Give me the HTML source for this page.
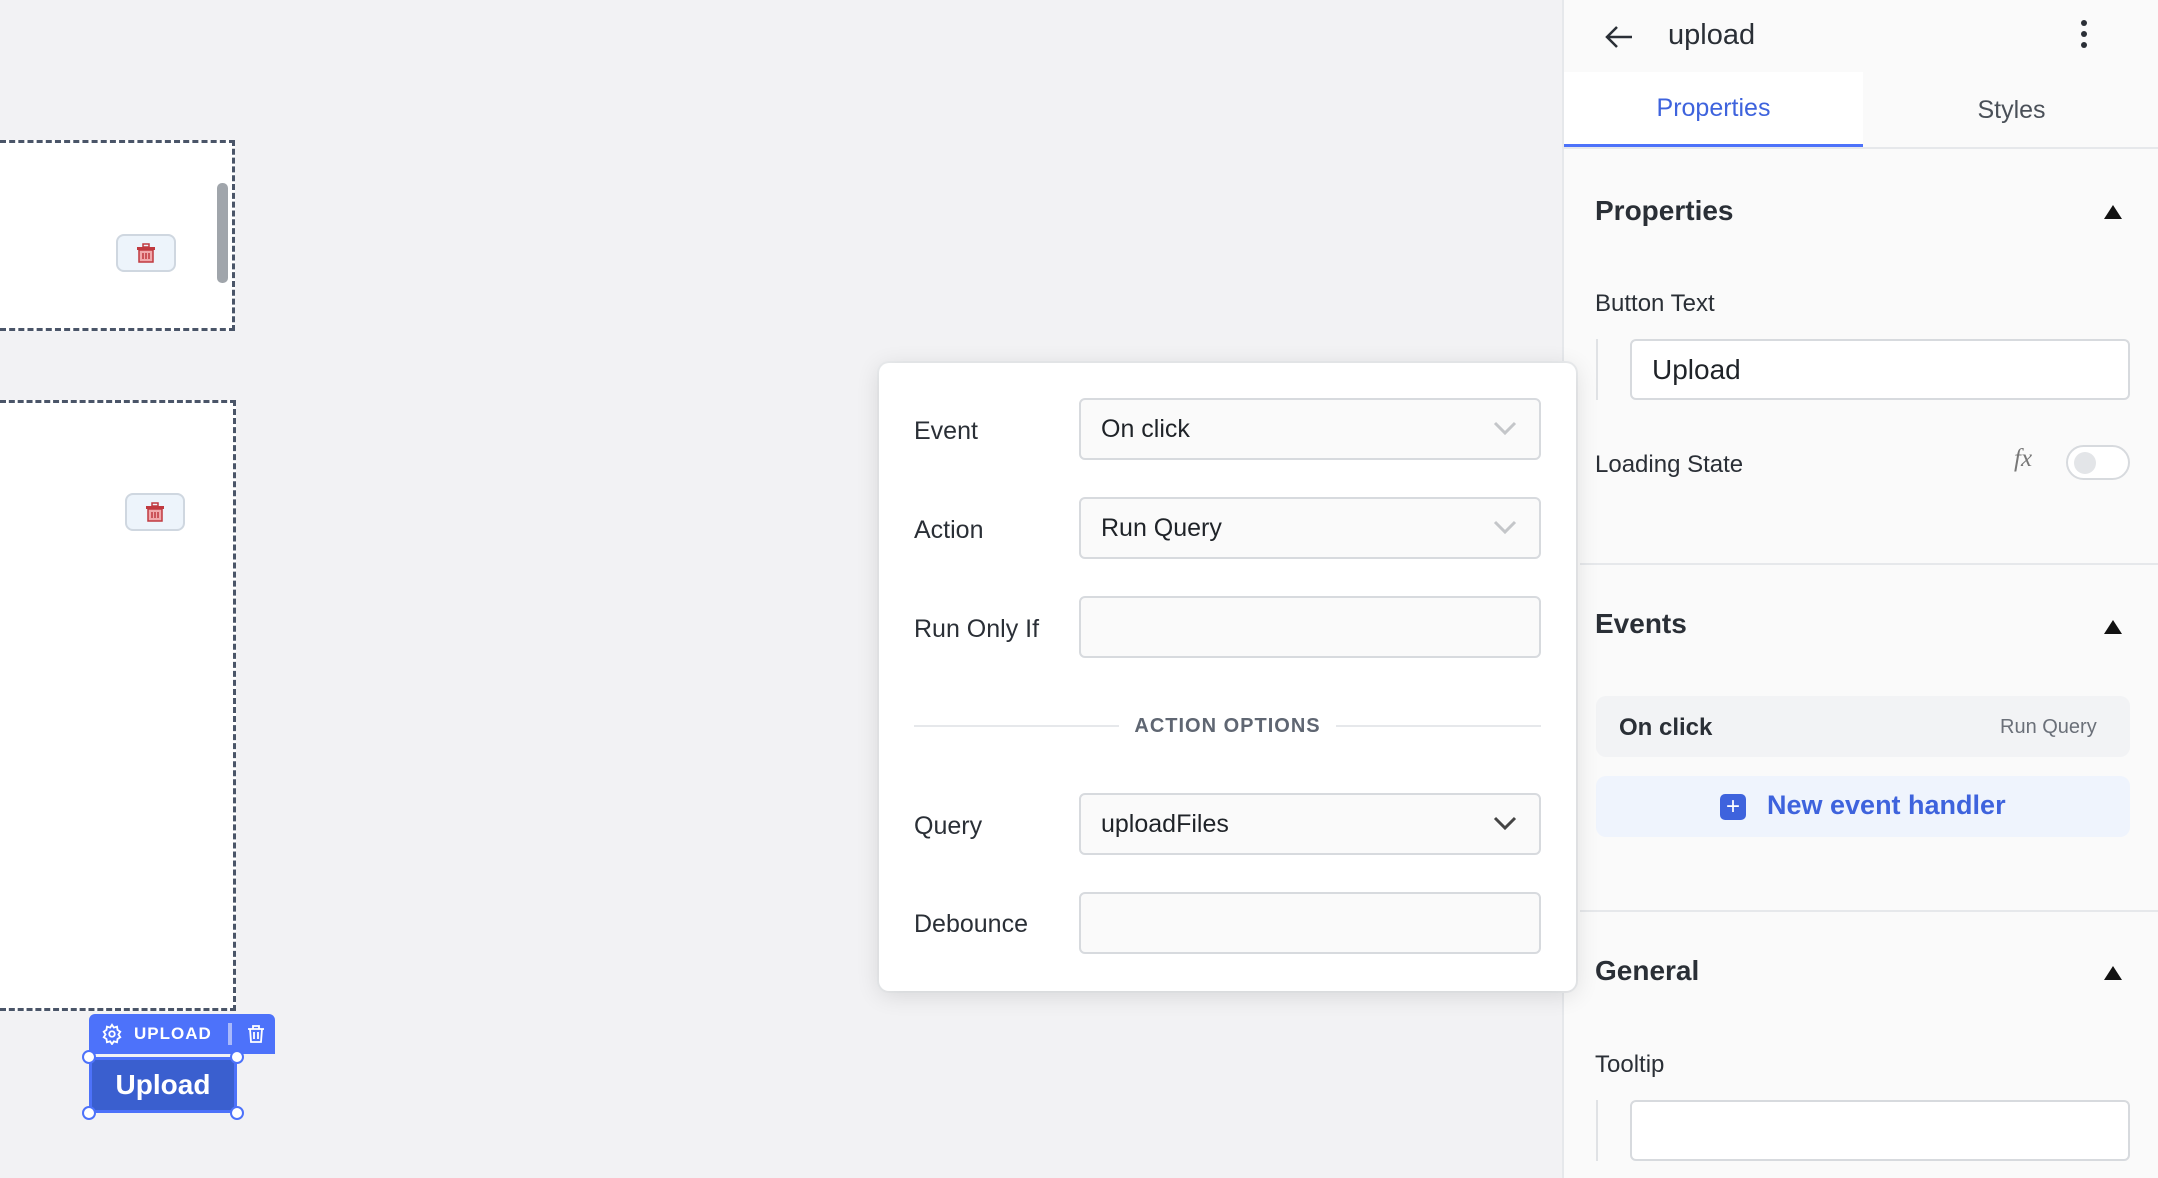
<!DOCTYPE html>
<html><head><meta charset="utf-8"><style>
*{box-sizing:border-box;margin:0;padding:0}
body{width:2158px;height:1178px;overflow:hidden;background:#f2f2f4;font-family:"Liberation Sans",sans-serif;color:#1f2328;position:relative}
.a{position:absolute}
.box{background:#fff;border:3px dashed #4a5568;border-left:none}
.trash{background:#edf4fb;border:2px solid #cfd7e0;border-radius:8px;display:flex;align-items:center;justify-content:center}
.panel{left:1562px;top:0;width:596px;height:1178px;background:#fafafa;border-left:2px solid #e6e8eb}
.lbl{font-size:25px;color:#2a2f36}
.inp{background:#fafafa;border:2px solid #d7dade;border-radius:6px;font-size:25px;color:#1f2328;display:flex;align-items:center;padding-left:20px}
.chev{position:absolute;right:22px;top:50%;margin-top:-8px}
.h{font-size:28px;font-weight:bold;color:#2a2f36}
.tri{width:0;height:0;border-left:9px solid transparent;border-right:9px solid transparent;border-bottom:14px solid #111}
</style></head><body>

<div class="a box" style="left:0;top:140px;width:235px;height:191px"></div>
<div class="a" style="left:217px;top:183px;width:11px;height:100px;background:#a0a5ab;border-radius:5px"></div>
<div class="a trash" style="left:116px;top:234px;width:60px;height:38px">
<svg width="22" height="22" viewBox="0 0 22 22"><rect x="8" y="2" width="6" height="3" fill="none" stroke="#c0393f" stroke-width="1.5"/><rect x="2" y="5" width="18" height="3" fill="#c0393f"/><rect x="4" y="8" width="14" height="12" fill="#f1a8ab" stroke="#c0393f" stroke-width="1.5"/><path d="M8 11v6M11 11v6M14 11v6" stroke="#c0393f" stroke-width="1.5"/></svg></div>
<div class="a box" style="left:0;top:400px;width:236px;height:611px"></div>
<div class="a trash" style="left:125px;top:493px;width:60px;height:38px">
<svg width="22" height="22" viewBox="0 0 22 22"><rect x="8" y="2" width="6" height="3" fill="none" stroke="#c0393f" stroke-width="1.5"/><rect x="2" y="5" width="18" height="3" fill="#c0393f"/><rect x="4" y="8" width="14" height="12" fill="#f1a8ab" stroke="#c0393f" stroke-width="1.5"/><path d="M8 11v6M11 11v6M14 11v6" stroke="#c0393f" stroke-width="1.5"/></svg></div>

<div class="a" style="left:89px;top:1014px;width:186px;height:40px;background:#4d72fa;border-radius:6px 6px 0 0;color:#fff;font-weight:bold;font-size:17px;letter-spacing:1px;display:flex;align-items:center">
<svg style="margin-left:12px" width="22" height="22" viewBox="0 0 24 24" fill="none" stroke="#fff" stroke-width="2"><circle cx="12" cy="12" r="3"/><path d="M12 2l2 3 3.5-1 .5 3.5 3 2-2 3 2 3-3 2-.5 3.5-3.5-1-2 3-2-3-3.5 1-.5-3.5-3-2 2-3-2-3 3-2 .5-3.5 3.5 1z"/></svg>
<span style="margin-left:11px">UPLOAD</span>
<span style="margin-left:16px;width:4px;height:22px;background:#a9b9fb"></span>
<svg style="margin-left:14px" width="20" height="20" viewBox="0 0 20 20" fill="none" stroke="#fff" stroke-width="1.8"><path d="M2 5h16M7 5V2h6v3M4 5l1 13h10l1-13M8 8v7M12 8v7"/></svg></div>
<div class="a" style="left:89px;top:1057px;width:148px;height:56px;background:#3a5fcf;border:3px solid #4d72fa;color:#fff;font-weight:bold;font-size:28px;display:flex;align-items:center;justify-content:center">Upload</div>
<div class="a" style="left:82px;top:1050px;width:14px;height:14px;border:2px solid #4d72fa;border-radius:50%;background:#fff"></div>
<div class="a" style="left:230px;top:1050px;width:14px;height:14px;border:2px solid #4d72fa;border-radius:50%;background:#fff"></div>
<div class="a" style="left:82px;top:1106px;width:14px;height:14px;border:2px solid #4d72fa;border-radius:50%;background:#fff"></div>
<div class="a" style="left:230px;top:1106px;width:14px;height:14px;border:2px solid #4d72fa;border-radius:50%;background:#fff"></div>

<div class="a panel">
<svg class="a" style="left:40px;top:24px" width="30" height="26" viewBox="0 0 30 26" fill="none" stroke="#2a2f36" stroke-width="2.5"><path d="M28 13H3M13 3L3 13l10 10"/></svg>
<div class="a" style="left:104px;top:19px;font-size:29px;color:#2a2f36">upload</div>
<div class="a" style="left:517px;top:20px;width:6px;height:6px;border-radius:50%;background:#2a2f36;box-shadow:0 11px 0 #2a2f36,0 22px 0 #2a2f36"></div>
<div class="a" style="left:0;top:72px;width:299px;height:76px;background:#fff;border-bottom:4px solid #4d72fa"></div>
<div class="a" style="left:0;top:147px;width:596px;height:2px;background:#e6e8eb"></div>
<div class="a" style="left:0;top:94px;width:299px;text-align:center;font-size:25px;color:#3e63dd">Properties</div>
<div class="a" style="left:299px;top:96px;width:297px;text-align:center;font-size:25px;color:#4a5058">Styles</div>
<div class="a h" style="left:31px;top:195px">Properties</div>
<div class="a tri" style="left:540px;top:205px"></div>
<div class="a lbl" style="left:31px;top:290px;font-size:24px">Button Text</div>
<div class="a" style="left:32px;top:339px;width:2px;height:61px;background:#e0e2e5"></div>
<div class="a inp" style="left:66px;top:339px;width:500px;height:61px;background:#fff;font-size:28px">Upload</div>
<div class="a lbl" style="left:31px;top:451px;font-size:24px">Loading State</div>
<div class="a" style="left:450px;top:445px;font-family:'Liberation Serif',serif;font-style:italic;font-size:25px;color:#777">fx</div>
<div class="a" style="left:502px;top:445px;width:64px;height:35px;border:2px solid #d7dade;border-radius:18px;background:#fff"><div style="position:absolute;left:6px;top:5px;width:22px;height:22px;border-radius:50%;background:#e3e5e8"></div></div>
<div class="a" style="left:16px;top:563px;width:580px;height:2px;background:#e6e8eb"></div>
<div class="a h" style="left:31px;top:608px">Events</div>
<div class="a tri" style="left:540px;top:620px"></div>
<div class="a" style="left:32px;top:696px;width:534px;height:61px;background:#f2f3f5;border-radius:10px"></div>
<div class="a" style="left:55px;top:714px;font-size:24px;font-weight:bold;color:#2a2f36">On click</div>
<div class="a" style="left:436px;top:716px;font-size:20px;color:#6b7079">Run Query</div>
<div class="a" style="left:32px;top:776px;width:534px;height:61px;background:#eff4fd;border-radius:10px"></div>
<div class="a" style="left:156px;top:794px;width:26px;height:26px;background:#3e63dd;border-radius:5px;color:#fff;font-size:24px;line-height:25px;text-align:center">+</div>
<div class="a" style="left:203px;top:790px;font-size:27px;font-weight:bold;color:#3e63dd">New event handler</div>
<div class="a" style="left:16px;top:910px;width:580px;height:2px;background:#e6e8eb"></div>
<div class="a h" style="left:31px;top:955px">General</div>
<div class="a tri" style="left:540px;top:966px"></div>
<div class="a lbl" style="left:31px;top:1051px;font-size:24px">Tooltip</div>
<div class="a" style="left:32px;top:1100px;width:2px;height:61px;background:#e0e2e5"></div>
<div class="a inp" style="left:66px;top:1100px;width:500px;height:61px;background:#fff"></div>
</div>

<div class="a" style="left:879px;top:363px;width:697px;height:628px;background:#fff;border-radius:10px;box-shadow:0 4px 24px rgba(0,0,0,.12),0 0 0 2px #eceef0">
<div class="a lbl" style="left:35px;top:54px">Event</div>
<div class="a inp" style="left:200px;top:35px;width:462px;height:62px">On click<svg class="chev" width="24" height="14" viewBox="0 0 24 14" fill="none" stroke="#c4c6c9" stroke-width="3"><path d="M2 2l10 10 10-10"/></svg></div>
<div class="a lbl" style="left:35px;top:153px">Action</div>
<div class="a inp" style="left:200px;top:134px;width:462px;height:62px">Run Query<svg class="chev" width="24" height="14" viewBox="0 0 24 14" fill="none" stroke="#c4c6c9" stroke-width="3"><path d="M2 2l10 10 10-10"/></svg></div>
<div class="a lbl" style="left:35px;top:252px">Run Only If</div>
<div class="a inp" style="left:200px;top:233px;width:462px;height:62px"></div>
<div class="a" style="left:35px;top:362px;width:205px;height:2px;background:#e6e8eb"></div>
<div class="a" style="left:457px;top:362px;width:205px;height:2px;background:#e6e8eb"></div>
<div class="a" style="left:240px;top:352px;width:217px;text-align:center;font-size:20px;font-weight:bold;letter-spacing:1px;color:#5f6672">ACTION OPTIONS</div>
<div class="a lbl" style="left:35px;top:449px">Query</div>
<div class="a inp" style="left:200px;top:430px;width:462px;height:62px">uploadFiles<svg class="chev" width="24" height="14" viewBox="0 0 24 14" fill="none" stroke="#444" stroke-width="3"><path d="M2 2l10 10 10-10"/></svg></div>
<div class="a lbl" style="left:35px;top:547px">Debounce</div>
<div class="a inp" style="left:200px;top:529px;width:462px;height:62px"></div>
</div>
</body></html>
